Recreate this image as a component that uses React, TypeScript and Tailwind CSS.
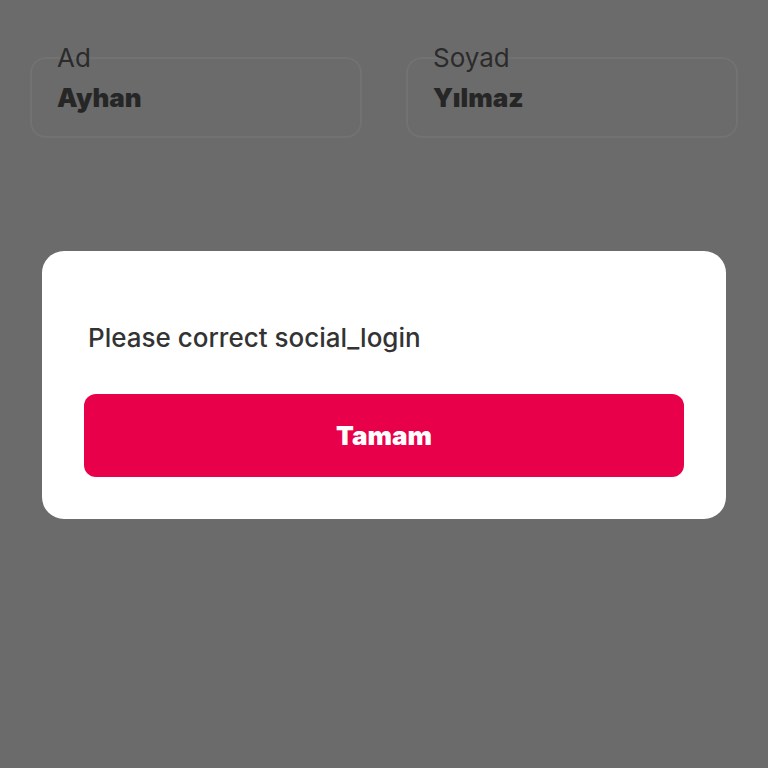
import React from "react";

function Field({ label, value }: { label: string; value: string }) {
  return (
    <div className="relative h-[81px] rounded-[16px] border-2 border-[#727272] flex items-center pl-[25px]">
      <span className="absolute -top-[16px] left-[25px] text-[26px] leading-[30px] text-[#2b2b2b]">
        {label}
      </span>
      <span className="text-[26px] leading-[30px] font-black text-[#262626]">{value}</span>
    </div>
  );
}

export default function App() {
  return (
    <div
      className="relative w-[768px] h-[768px] overflow-hidden bg-[#6b6b6b]"
      style={{ fontFamily: "Inter, 'Noto Sans', sans-serif" }}
    >
      <div className="grid grid-cols-2 gap-[44px] px-[30px] pt-[57px]">
        <Field label="Ad" value="Ayhan" />
        <Field label="Soyad" value="Yılmaz" />
      </div>

      <div className="absolute left-[42px] top-[251px] w-[684px] h-[268px] rounded-[22px] bg-white px-[42px] pt-[71px] flex flex-col">
        <p className="pl-[4px] text-[26px] leading-[32px] font-medium text-[#333333]">Please correct social_login</p>
        <button className="mt-[40px] h-[83px] w-full rounded-[12px] bg-[#e8004a] text-white text-[26px] font-black">
          Tamam
        </button>
      </div>
    </div>
  );
}
